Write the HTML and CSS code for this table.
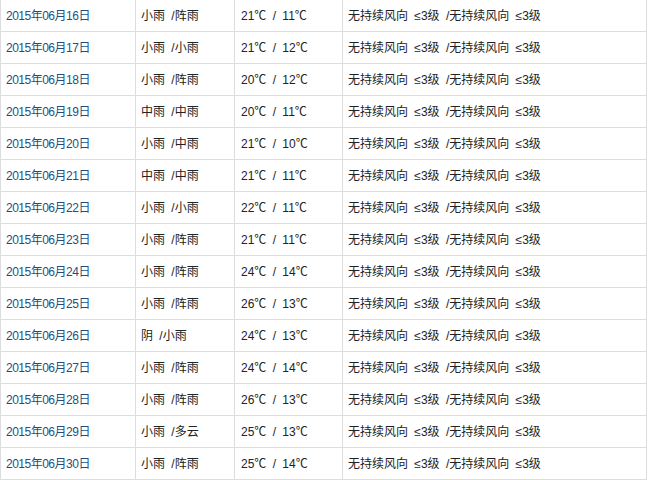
FILE: index.html
```html
<!DOCTYPE html>
<html lang="zh-CN">
<head>
<meta charset="utf-8">
<link rel="stylesheet" href="styles.css">
</head>
<body>
<table class="weather">
  <colgroup>
    <col class="c-date"><col class="c-wx"><col class="c-temp"><col class="c-wind">
  </colgroup>
  <tbody>
    <tr><td><a class="day">2015年06月16日</a></td><td>小雨 /阵雨</td><td>21℃ / 11℃</td><td>无持续风向 ≤3级 /无持续风向 ≤3级</td></tr>
    <tr><td><a class="day">2015年06月17日</a></td><td>小雨 /小雨</td><td>21℃ / 12℃</td><td>无持续风向 ≤3级 /无持续风向 ≤3级</td></tr>
    <tr><td><a class="day">2015年06月18日</a></td><td>小雨 /阵雨</td><td>20℃ / 12℃</td><td>无持续风向 ≤3级 /无持续风向 ≤3级</td></tr>
    <tr><td><a class="day">2015年06月19日</a></td><td>中雨 /中雨</td><td>20℃ / 11℃</td><td>无持续风向 ≤3级 /无持续风向 ≤3级</td></tr>
    <tr><td><a class="day">2015年06月20日</a></td><td>小雨 /中雨</td><td>21℃ / 10℃</td><td>无持续风向 ≤3级 /无持续风向 ≤3级</td></tr>
    <tr><td><a class="day">2015年06月21日</a></td><td>中雨 /中雨</td><td>21℃ / 11℃</td><td>无持续风向 ≤3级 /无持续风向 ≤3级</td></tr>
    <tr><td><a class="day">2015年06月22日</a></td><td>小雨 /小雨</td><td>22℃ / 11℃</td><td>无持续风向 ≤3级 /无持续风向 ≤3级</td></tr>
    <tr><td><a class="day">2015年06月23日</a></td><td>小雨 /阵雨</td><td>21℃ / 11℃</td><td>无持续风向 ≤3级 /无持续风向 ≤3级</td></tr>
    <tr><td><a class="day">2015年06月24日</a></td><td>小雨 /阵雨</td><td>24℃ / 14℃</td><td>无持续风向 ≤3级 /无持续风向 ≤3级</td></tr>
    <tr><td><a class="day">2015年06月25日</a></td><td>小雨 /阵雨</td><td>26℃ / 13℃</td><td>无持续风向 ≤3级 /无持续风向 ≤3级</td></tr>
    <tr><td><a class="day">2015年06月26日</a></td><td>阴 /小雨</td><td>24℃ / 13℃</td><td>无持续风向 ≤3级 /无持续风向 ≤3级</td></tr>
    <tr><td><a class="day">2015年06月27日</a></td><td>小雨 /阵雨</td><td>24℃ / 14℃</td><td>无持续风向 ≤3级 /无持续风向 ≤3级</td></tr>
    <tr><td><a class="day">2015年06月28日</a></td><td>小雨 /阵雨</td><td>26℃ / 13℃</td><td>无持续风向 ≤3级 /无持续风向 ≤3级</td></tr>
    <tr><td><a class="day">2015年06月29日</a></td><td>小雨 /多云</td><td>25℃ / 13℃</td><td>无持续风向 ≤3级 /无持续风向 ≤3级</td></tr>
    <tr><td><a class="day">2015年06月30日</a></td><td>小雨 /阵雨</td><td>25℃ / 14℃</td><td>无持续风向 ≤3级 /无持续风向 ≤3级</td></tr>
  </tbody>
</table>
</body>
</html>
```

FILE: styles.css
```css
html, body {
  margin: 0;
  padding: 0;
  background: #ffffff;
}

.weather {
  border-collapse: collapse;
  table-layout: fixed;
  width: 646px;
  margin-top: -1px;
  font-family: "Liberation Sans", "Noto Sans CJK SC", sans-serif;
  font-size: 12px;
  color: #222222;
  word-spacing: 3px;
}

.c-date { width: 135px; }
.c-wx { width: 99px; }
.c-temp { width: 108px; }
.c-wind { width: 304px; }

.weather td {
  border: 1px solid #dddddd;
  height: 32px;
  padding: 0 0 0 5px;
  box-sizing: border-box;
  vertical-align: middle;
  white-space: nowrap;
  overflow: hidden;
  line-height: 14px;
}

.weather td:nth-child(3) {
  padding-left: 6px;
}

.day {
  color: #1f4f82;
  text-decoration: none;
  letter-spacing: -0.5px;
}
```
